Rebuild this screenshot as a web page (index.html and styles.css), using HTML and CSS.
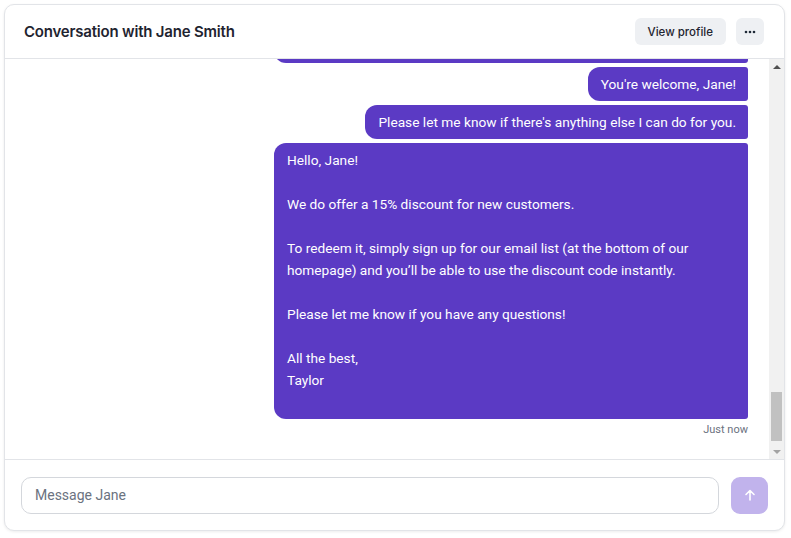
FILE: index.html
```html
<!DOCTYPE html>
<html lang="en">
<head>
<meta charset="utf-8">
<title>Conversation with Jane Smith</title>
<link rel="stylesheet" href="styles.css">
</head>
<body>
<div class="card">
  <header class="header">
    <h1 class="title">Conversation with Jane Smith</h1>
    <div class="actions">
      <button class="btn">View profile</button>
      <button class="btn btn-icon" aria-label="More">
        <svg width="12" height="4" viewBox="0 0 12 4"><circle cx="2" cy="2" r="1.3" fill="#1f2937"/><circle cx="6" cy="2" r="1.3" fill="#1f2937"/><circle cx="10" cy="2" r="1.3" fill="#1f2937"/></svg>
      </button>
    </div>
  </header>
  <div class="body">
    <div class="scroller">
      <div class="thread">
        <div class="group in">
          <div class="bubble">Thanks so much for all the help, Taylor!</div>
          <div class="bubble">One last thing — do you have any discounts for first-time customers?</div>
          <div class="time">Today</div>
        </div>
        <div class="group out">
          <div class="bubble">Thanks for waiting, Jane! I've just confirmed with our team which offers are currently available for new customers, and I've also added a note to your account so that any questions you have later can be answered quickly.</div>
          <div class="bubble">You're welcome, Jane!</div>
          <div class="bubble">Please let me know if there's anything else I can do for you.</div>
          <div class="bubble">Hello, Jane!

We do offer a 15% discount for new customers.

To redeem it, simply sign up for our email list (at the bottom of our homepage) and you’ll be able to use the discount code instantly.

Please let me know if you have any questions!

All the best,
Taylor
&nbsp;</div>
          <div class="time">Just now</div>
        </div>
      </div>
    </div>
    <div class="scrollbar" aria-hidden="true">
      <div class="sb-btn sb-up"></div>
      <div class="sb-track"><div class="sb-thumb"></div></div>
      <div class="sb-btn sb-down"></div>
    </div>
  </div>
  <footer class="composer">
    <input class="input" type="text" placeholder="Message Jane">
    <button class="send" aria-label="Send">
      <svg width="14" height="14" viewBox="0 0 14 14" fill="none" stroke="#fff" stroke-width="1.6" stroke-linecap="round" stroke-linejoin="round"><path d="M7 12V2.5M3 6.5L7 2.5l4 4"/></svg>
    </button>
  </footer>
</div>
</body>
</html>
```
FILE: styles.css
```css
* { box-sizing: border-box; }
html, body { margin: 0; padding: 0; background: #ffffff; }
body {
  padding: 4px 6px 7px 4px;
  font-family: Roboto, "Liberation Sans", sans-serif;
  color: #111827;
}
.card {
  width: 781px;
  height: 527px;
  border: 1px solid #e2e4e8;
  border-radius: 10px;
  background: #fff;
  box-shadow: 0 1px 3px rgba(0,0,0,0.08);
  display: flex;
  flex-direction: column;
  overflow: hidden;
}
.header {
  height: 54px;
  flex: none;
  display: flex;
  align-items: center;
  justify-content: space-between;
  padding: 0 20px 0 19px;
  border-bottom: 1px solid #e2e4e8;
}
.title {
  margin: 0;
  font-family: Inter, "Liberation Sans", sans-serif;
  font-size: 15px;
  font-weight: 600;
  color: #1f2430;
  letter-spacing: -0.2px;
}
.actions { display: flex; gap: 10px; }
.btn {
  height: 27px;
  border: none;
  border-radius: 6px;
  background: #eef0f3;
  padding: 0 13px;
  font-family: Inter, "Liberation Sans", sans-serif;
  font-size: 11.5px;
  font-weight: 500;
  color: #1f2430;
  display: flex;
  align-items: center;
  justify-content: center;
  white-space: nowrap;
}
.btn-icon { width: 28px; padding: 0; }
.body {
  flex: 1;
  min-height: 0;
  display: flex;
}
.scroller {
  flex: 1;
  min-width: 0;
  overflow: hidden;
  display: flex;
  flex-direction: column-reverse;
}
.scrollbar {
  width: 15px;
  flex: none;
  background: #f1f1f1;
  display: flex;
  flex-direction: column;
}
.sb-btn {
  height: 15px;
  flex: none;
  display: flex;
  align-items: center;
  justify-content: center;
}
.sb-up::before {
  content: "";
  border-left: 4px solid transparent;
  border-right: 4px solid transparent;
  border-bottom: 4px solid #505050;
}
.sb-down::before {
  content: "";
  border-left: 4px solid transparent;
  border-right: 4px solid transparent;
  border-top: 4px solid #a3a3a3;
}
.sb-track {
  flex: 1;
  display: flex;
  flex-direction: column;
  justify-content: flex-end;
  padding: 0 2px 3px;
}
.sb-thumb {
  height: 49px;
  background: #c1c1c1;
}
.thread {
  padding: 20px 21px 22px 20px;
  display: flex;
  flex-direction: column;
  gap: 20px;
}
.group { display: flex; flex-direction: column; gap: 4px; }
.group.out { align-items: flex-end; }
.group.in { align-items: flex-start; }
.bubble {
  max-width: 474px;
  padding: 6px 12px 6px 13px;
  font-size: 13.7px;
  line-height: 22px;
  white-space: pre-line;
}
.out .bubble {
  background: #5b3ac4;
  color: #fff;
  border-radius: 12px 3px 3px 12px;
}
.in .bubble {
  background: #eef0f3;
  color: #1f2430;
  border-radius: 3px 12px 12px 3px;
}
.time {
  font-size: 11px;
  color: #6b7280;
  line-height: 14px;
}
.composer {
  height: 71px;
  flex: none;
  border-top: 1px solid #e2e4e8;
  display: flex;
  align-items: center;
  gap: 12px;
  padding: 0 16px;
}
.input {
  flex: 1;
  height: 37px;
  border: 1px solid #d4d7dc;
  border-radius: 10px;
  padding: 0 13px;
  font-family: Roboto, "Liberation Sans", sans-serif;
  font-size: 14px;
  color: #111827;
  outline: none;
}
.input::placeholder { color: #6b7280; }
.send {
  width: 37px;
  height: 37px;
  border: none;
  border-radius: 9px;
  background: #c1b3ec;
  display: flex;
  align-items: center;
  justify-content: center;
  padding: 0;
}
```
